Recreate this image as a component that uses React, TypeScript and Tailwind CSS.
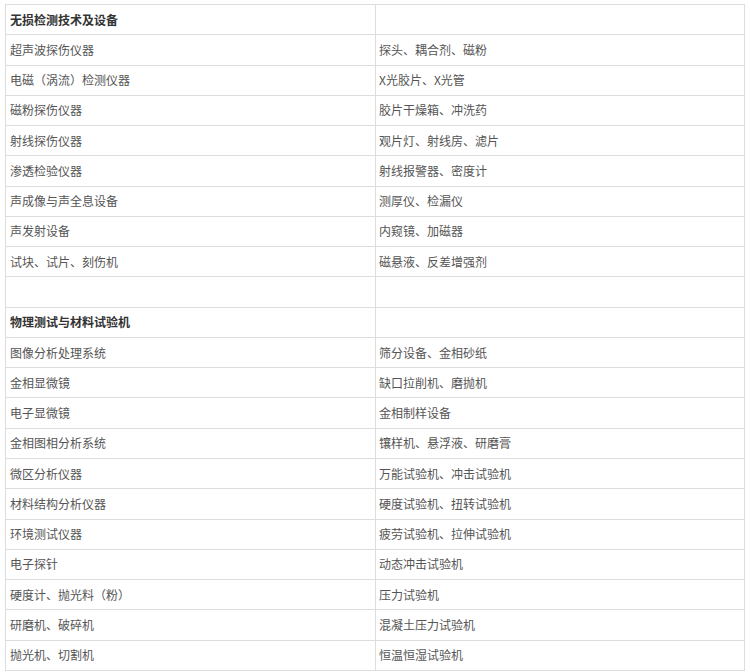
import React from "react";

type Row = { l: string; r: string; bold?: boolean };

const rows: Row[] = [
  { l: "无损检测技术及设备", r: "", bold: true },
  { l: "超声波探伤仪器", r: "探头、耦合剂、磁粉" },
  { l: "电磁（涡流）检测仪器", r: "X光胶片、X光管" },
  { l: "磁粉探伤仪器", r: "胶片干燥箱、冲洗药" },
  { l: "射线探伤仪器", r: "观片灯、射线房、滤片" },
  { l: "渗透检验仪器", r: "射线报警器、密度计" },
  { l: "声成像与声全息设备", r: "测厚仪、检漏仪" },
  { l: "声发射设备", r: "内窥镜、加磁器" },
  { l: "试块、试片、刻伤机", r: "磁悬液、反差增强剂" },
  { l: "", r: "" },
  { l: "物理测试与材料试验机", r: "", bold: true },
  { l: "图像分析处理系统", r: "筛分设备、金相砂纸" },
  { l: "金相显微镜", r: "缺口拉削机、磨抛机" },
  { l: "电子显微镜", r: "金相制样设备" },
  { l: "金相图相分析系统", r: "镶样机、悬浮液、研磨膏" },
  { l: "微区分析仪器", r: "万能试验机、冲击试验机" },
  { l: "材料结构分析仪器", r: "硬度试验机、扭转试验机" },
  { l: "环境测试仪器", r: "疲劳试验机、拉伸试验机" },
  { l: "电子探针", r: "动态冲击试验机" },
  { l: "硬度计、抛光料（粉）", r: "压力试验机" },
  { l: "研磨机、破碎机", r: "混凝土压力试验机" },
  { l: "抛光机、切割机", r: "恒温恒湿试验机" },
];

export default function App() {
  return (
    <div
      className="w-[750px] h-[672px] overflow-hidden bg-white pt-[4px] pl-[5px]"
      style={{ fontFamily: '"Noto Sans CJK SC", "Noto Sans", sans-serif' }}
    >
      <div className="grid grid-cols-[370px_369px] w-[740px] border-l border-t border-[#dddddd]">
        {rows.map((row, i) => (
          <React.Fragment key={i}>
            <div
              className={`h-[30.27px] border-r border-b border-[#dddddd] pl-[4px] flex items-center text-[12px] leading-none ${
                row.bold ? "font-bold text-[#333333]" : "text-[#555555]"
              }`}
            >
              {row.l}
            </div>
            <div className="h-[30.27px] border-r border-b border-[#dddddd] pl-[3px] flex items-center text-[12px] leading-none text-[#555555]">
              {row.r}
            </div>
          </React.Fragment>
        ))}
      </div>
    </div>
  );
}
